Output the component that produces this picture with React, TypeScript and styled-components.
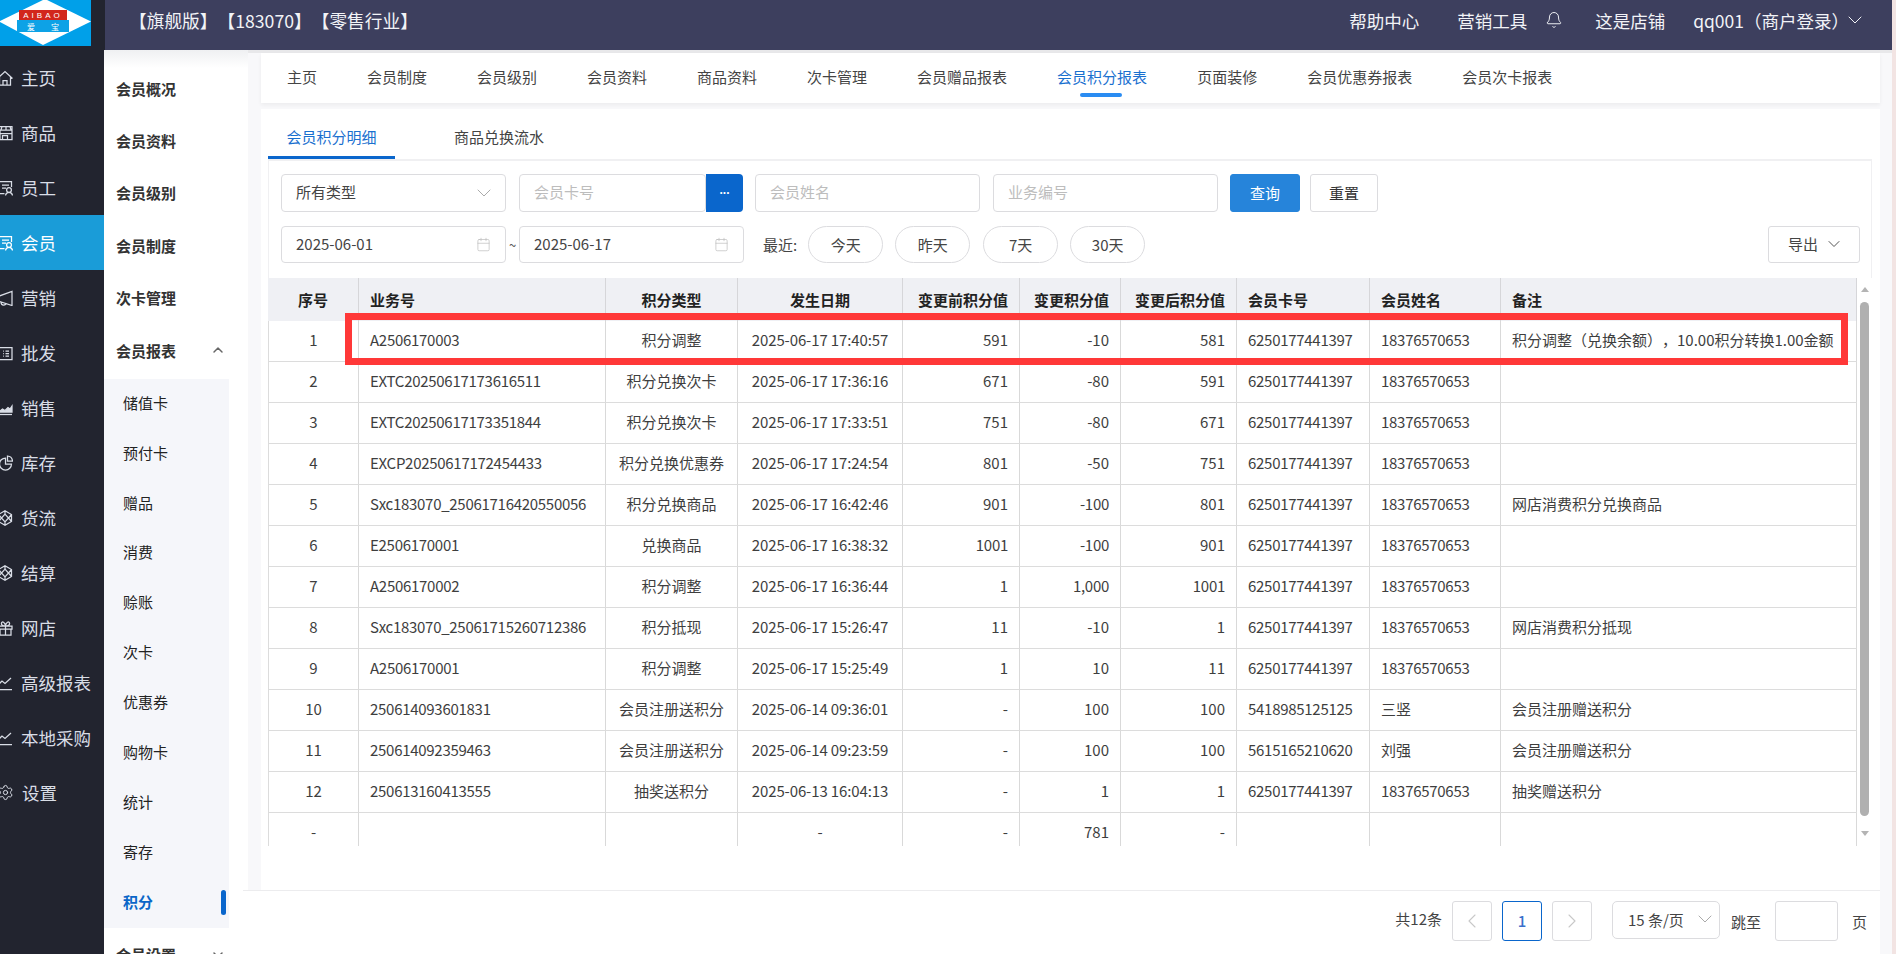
import React from "react";
import styled, { createGlobalStyle } from "styled-components";
import { Bell, Calendar, ChevronDown, ChevronLeft, ChevronRight, ChevronUp, Settings } from "lucide-react";

const Global = createGlobalStyle`
  html, body { margin: 0; padding: 0; width: 100%; height: 100%; overflow: hidden; background: #fff; }
  * { box-sizing: border-box; }
  body, input, button {
    font-family: "Noto Sans CJK SC", "Liberation Sans", sans-serif;
    text-spacing-trim: space-all;
  }
`;

const Shell = styled.div`
  position: relative;
  display: flex;
  width: 1896px;
  height: 954px;
  overflow: hidden;
  background: #f2e4e3;
  color: #333;
`;

const Rail = styled.aside`
  flex: 0 0 104px;
  background: #22242f;
  display: flex;
  flex-direction: column;
`;

const LogoSlot = styled.div`
  height: 50px;
  display: flex;
  align-items: flex-start;
`;

const RailItem = styled.div<{ $active?: boolean }>`
  height: 55px;
  flex: 0 0 55px;
  display: flex;
  align-items: center;
  gap: 8px;
  background: ${(p) => (p.$active ? "#1a9cd8" : "transparent")};
  color: ${(p) => (p.$active ? "#fff" : "#d9dde6")};
  font-size: 17.5px;
  white-space: nowrap;
  overflow: hidden;
`;

const RailIcon = styled.svg`
  flex: 0 0 16px;
  width: 16px;
  height: 16px;
  margin-left: -3px;
  fill: none;
  stroke: currentColor;
  stroke-width: 1.25;
`;

const GearWrap = styled.span`
  flex: 0 0 16px;
  margin-left: -3px;
  display: flex;
  justify-content: center;
`;

const Main = styled.div`
  flex: 0 0 1788px;
  display: flex;
  flex-direction: column;
  min-width: 0;
`;

const Header = styled.header`
  flex: 0 0 50px;
  margin-left: 1px;
  display: flex;
  align-items: center;
  padding: 0 25px 10px 24px;
  background: #3d3f5e;
  color: #f2f3f7;
  font-size: 17.5px;
  white-space: nowrap;
  box-shadow: -1px 0 0 #22242f;
`;

const Edition = styled.div`
  font-size: 17.7px;
  flex: 1;
`;

const HeaderLink = styled.span<{ $gap?: number }>`
  margin-left: ${(p) => p.$gap ?? 0}px;
`;

const HeaderIcon = styled.span<{ $gap: number }>`
  margin-left: ${(p) => p.$gap}px;
  display: flex;
`;

const Body = styled.div`
  flex: 1;
  display: flex;
  min-height: 0;
`;

const SubNav = styled.nav`
  flex: 0 0 144px;
  background: linear-gradient(#eff0f2, #fff 18px);
  display: flex;
  flex-direction: column;
  overflow: hidden;
`;

const SubHead = styled.div`
  flex: 0 0 52.4px;
  width: 125px;
  display: flex;
  align-items: center;
  justify-content: space-between;
  padding: 0 3px 0 12px;
  font-size: 15px;
  font-weight: 700;
  color: #333;
  transform: translateY(12px);
`;

const SubGroup = styled.div`
  flex: 0 0 549px;
  width: 125px;
  margin-top: 15px;
  background: #f5f6fa;
  display: flex;
  flex-direction: column;
`;

const SubItem = styled.div<{ $active?: boolean }>`
  position: relative;
  flex: 0 0 49.9px;
  display: flex;
  align-items: center;
  padding: 0 0 4px 19px;
  font-size: 15px;
  font-weight: ${(p) => (p.$active ? 700 : 400)};
  color: ${(p) => (p.$active ? "#0a66c8" : "#222")};
`;

const ActiveBar = styled.span`
  position: absolute;
  right: 3px;
  top: 12px;
  width: 5px;
  height: 25px;
  border-radius: 3px;
  background: #0a66cc;
`;

const SubFoot = styled(SubHead)`
  transform: none;
`;

const Content = styled.div`
  flex: 1;
  min-width: 0;
  display: flex;
  flex-direction: column;
  padding: 3px 12px 0 13px;
  background: #f8f8fa;
  box-shadow: inset 0 3px 0 #e8e8ea;
`;

const TopTabs = styled.div`
  flex: 0 0 50px;
  display: flex;
  align-items: center;
  gap: 50px;
  padding: 0 26px 4px;
  background: #fff;
  box-shadow: 0 2px 4px rgba(0, 0, 0, 0.05);
  margin-bottom: 6px;
  font-size: 15px;
  color: #444;
`;

const TopTab = styled.div<{ $active?: boolean }>`
  position: relative;
  white-space: nowrap;
  color: ${(p) => (p.$active ? "#1a70cf" : "#444")};
`;

const TopTabMark = styled.span`
  position: absolute;
  left: 23px;
  right: 25px;
  bottom: -10px;
  height: 4px;
  border-radius: 2px;
  background: #2a8cf2;
`;

const Panel = styled.section`
  flex: 0 0 781px;
  display: flex;
  flex-direction: column;
  padding: 0 8px 0 7px;
  background: #fff;
`;

const InnerTabs = styled.div`
  flex: 0 0 51px;
  display: flex;
  border-bottom: 2px solid #f0f0f2;
  font-size: 15px;
`;

const InnerTab = styled.div<{ $active?: boolean }>`
  width: ${(p) => (p.$active ? 127 : 208)}px;
  height: 50px;
  display: flex;
  align-items: center;
  justify-content: center;
  padding-top: 8px;
  color: ${(p) => (p.$active ? "#1a70cf" : "#444")};
  border-bottom: 3px solid ${(p) => (p.$active ? "#0a66cc" : "transparent")};
`;

const Filters = styled.div`
  flex: 0 0 117px;
  display: flex;
  flex-direction: column;
  gap: 14px;
  padding: 13px 11px 0 12px;
  border-left: 1px solid #f0f0f2;
  border-right: 1px solid #f0f0f2;
`;

const FilterRow = styled.div`
  display: flex;
  align-items: center;
`;

const Field = styled.div<{ $w?: number; $ml?: number; $h?: number }>`
  flex: 0 0 ${(p) => p.$w ?? 225}px;
  height: ${(p) => p.$h ?? 38}px;
  margin-left: ${(p) => p.$ml ?? 0}px;
  display: flex;
  align-items: center;
  justify-content: space-between;
  padding: 0 15px 3px 14px;
  border: 1px solid #dcdcdf;
  border-radius: 4px;
  background: #fff;
  font-size: 15px;
  color: #444;
`;

const FieldIcon = styled.span<{ $mr: number }>`
  display: flex;
  margin-right: ${(p) => p.$mr}px;
  transform: translateY(1px);
`;

const Placeholder = styled.span`
  color: #bdbdbd;
`;

const DotsButton = styled.div`
  flex: 0 0 37px;
  height: 38px;
  display: flex;
  align-items: center;
  justify-content: center;
  padding-bottom: 7px;
  background: #0a66cc;
  border-radius: 0 4px 4px 0;
  color: #fff;
  font-family: "Liberation Sans", sans-serif;
  font-size: 12px;
  font-weight: 700;
`;

const Btn = styled.div<{ $primary?: boolean; $w: number; $ml: number }>`
  flex: 0 0 ${(p) => p.$w}px;
  height: 38px;
  margin-left: ${(p) => p.$ml}px;
  padding-bottom: 2px;
  display: flex;
  align-items: center;
  justify-content: center;
  border-radius: 3px;
  font-size: 15px;
  background: ${(p) => (p.$primary ? "#2684da" : "#fff")};
  color: ${(p) => (p.$primary ? "#fff" : "#333")};
  border: 1px solid ${(p) => (p.$primary ? "#2684da" : "#dcdcdf")};
`;

const Tilde = styled.span`
  flex: 0 0 13px;
  text-align: center;
  font-size: 13px;
  color: #555;
`;

const RecentLabel = styled.span`
  margin-left: 19px;
  font-size: 15px;
  color: #444;
  white-space: nowrap;
`;

const Pill = styled.div<{ $ml: number }>`
  flex: 0 0 75px;
  height: 37px;
  margin-left: ${(p) => p.$ml}px;
  padding-bottom: 1px;
  display: flex;
  align-items: center;
  justify-content: center;
  border: 1px solid #dcdcdf;
  border-radius: 19px;
  font-size: 15px;
  color: #444;
`;

const ExportBtn = styled.div`
  margin-left: auto;
  flex: 0 0 92px;
  height: 37px;
  display: flex;
  align-items: center;
  gap: 6px;
  padding: 0 0 2px 19px;
  border: 1px solid #dcdcdf;
  border-radius: 3px;
  font-size: 15px;
  color: #444;
`;

const TableArea = styled.div`
  flex: 0 0 568px;
  display: flex;
  overflow: hidden;
`;

const TableClip = styled.div`
  flex: 0 0 1589px;
  height: 568px;
  overflow: hidden;
`;

const Table = styled.table`
  width: 1589px;
  table-layout: fixed;
  border-collapse: separate;
  border-spacing: 0;
  font-size: 15px;
  color: #3e3e3e;
`;

const Th = styled.th<{ $align?: string }>`
  height: 43px;
  padding: 0 11px;
  background: #eff0f4;
  font-weight: 700;
  color: #222;
  text-align: ${(p) => p.$align ?? "left"};
  border-right: 1px solid #d6d6d9;
  white-space: nowrap;
`;

const Td = styled.td<{ $align?: string; $track?: number }>`
  height: 41px;
  padding: 0 11px 4px;
  text-align: ${(p) => p.$align ?? "left"};
  letter-spacing: ${(p) => p.$track ?? 0}px;
  border-right: 1px solid #d9d9d9;
  border-bottom: 1px solid #dcdcdc;
  white-space: nowrap;
  overflow: hidden;
  &:first-child { border-left: 1px solid #dcdcdc; }
`;

const ScrollTrack = styled.div`
  flex: 0 0 15px;
  display: flex;
  flex-direction: column;
  align-items: center;
  padding: 9px 0 10px;
`;

const ArrowUp = styled.span`
  width: 0;
  height: 0;
  border-left: 4.5px solid transparent;
  border-right: 4.5px solid transparent;
  border-bottom: 5px solid #b4b4b4;
  margin-bottom: 10px;
`;

const ArrowDown = styled.span`
  width: 0;
  height: 0;
  border-left: 4.5px solid transparent;
  border-right: 4.5px solid transparent;
  border-top: 5px solid #b4b4b4;
  margin-top: 15px;
`;

const Thumb = styled.span`
  flex: 0 0 514px;
  width: 9px;
  border-radius: 5px;
  background: #b0b0b0;
`;

const Footer = styled.footer`
  flex: 1;
  margin-left: -18px;
  padding: 10px 13px 0 0;
  display: flex;
  justify-content: flex-end;
  align-items: flex-start;
  background: #fff;
  border-top: 1px solid #ececee;
  font-size: 15px;
  color: #444;
`;

const Total = styled.span`
  line-height: 36px;
  margin-right: 10px;
  white-space: nowrap;
`;

const PageBox = styled.div<{ $active?: boolean; $ml?: number }>`
  flex: 0 0 40px;
  height: 40px;
  margin-left: ${(p) => p.$ml ?? 0}px;
  padding-bottom: ${(p) => (p.$active ? 2 : 0)}px;
  display: flex;
  align-items: center;
  justify-content: center;
  border: 1px solid ${(p) => (p.$active ? "#0a66cc" : "#dcdcdf")};
  border-radius: 3px;
  color: ${(p) => (p.$active ? "#3a6fcb" : "#c8c8c8")};
  font-weight: ${(p) => (p.$active ? 500 : 400)};
`;

const SizeSelect = styled.div`
  flex: 0 0 108px;
  height: 38px;
  margin-left: 20px;
  display: flex;
  align-items: center;
  justify-content: space-between;
  padding: 0 2px 2px 15px;
  border: 1px solid #dcdcdf;
  border-radius: 5px;
  white-space: nowrap;
`;

const JumpLabel = styled.span<{ $ml: number }>`
  margin-left: ${(p) => p.$ml}px;
  line-height: 42px;
  white-space: nowrap;
`;

const JumpInput = styled.div`
  flex: 0 0 63px;
  height: 40px;
  margin-left: 14px;
  border: 1px solid #dcdcdf;
  border-radius: 3px;
`;

const RedBox = styled.div`
  position: absolute;
  left: 345px;
  top: 313px;
  width: 1503px;
  height: 52px;
  border: 7px solid #ff3838;
  pointer-events: none;
`;

const paths: Record<string, React.ReactNode> = {
  home: <path d="M0.5 8.5 8 1.5l7.5 7M2.5 7v8h11V7M6 15v-4.5h4V15" />,
  store: <path d="M2 1.5h13v3.5H2zM3 5v9.5h12V5M2 8.5h13M5.5 14.5v-4h5v4M5 1.5 4 5M9 1.5V5M13 1.5 14 5" />,
  card: <path d="M14.5 7V1.5H2v12h5.500M5 5h7M5 8h4M12 7.500a2.400 2.400 0 1 1 0 4.800 2.400 2.400 0 0 1 0-4.800zM8.500 15.500c.3-2 1.800-3.200 3.500-3.200s3.200 1.200 3.500 3.200" />,
  horn: <path d="M15 1.500v14L1 11V6.500zM4 12c0 1.800 1 3 2.500 3S9 14 9 13" />,
  list: <path d="M2 2.500h13v12H2zM6 6h.8M6 8.500h.8M6 11h.8M8.500 6H12M8.500 8.500H12M8.500 11H12" />,
  area: (
    <>
      <path d="M2 12l3.500-3 2.500 1.500 3-3 2 1.500 2-3V12z" fill="currentColor" />
      <path d="M0 14.500h15" />
    </>
  ),
  pie: <path d="M8.500 3a6 6 0 1 0 6 6h-6zM10.500 1a5.500 5.500 0 0 1 5 5h-5z" />,
  cube: <path d="M8 .8l6.500 3.700v7L8 15.200l-6.500-3.700v-7zM8 4.200l3.500 3.800L8 11.800 4.500 8zM8 .8v3.400M8 15.200v-3.400M1.500 4.500 4.500 8l-3 3.500M14.500 4.500 11.500 8l3 3.500" />,
  gift: <path d="M2 6h13v3H2zM3 9v6h11V9M8.500 6v9M8.500 6C6 6 4 5 4.500 3s3.500-1 4 3c.500-4 3.500-5 4-3s-1.500 3-4 3" />,
  line: <path d="M1 10l4-4 3 2.500L14 3M0 14.500h15" />,
};

function NavIcon({ name }: { name: string }) {
  if (name === "gear") {
    return (
      <GearWrap>
        <Settings size={17} strokeWidth={1.4} />
      </GearWrap>
    );
  }
  return <RailIcon viewBox="0 0 16 16">{paths[name]}</RailIcon>;
}

const railItems: [string, string][] = [
  ["主页", "home"],
  ["商品", "store"],
  ["员工", "card"],
  ["会员", "card"],
  ["营销", "horn"],
  ["批发", "list"],
  ["销售", "area"],
  ["库存", "pie"],
  ["货流", "cube"],
  ["结算", "cube"],
  ["网店", "gift"],
  ["高级报表", "line"],
  ["本地采购", "line"],
  ["设置", "gear"],
];

const subHeads = ["会员概况", "会员资料", "会员级别", "会员制度", "次卡管理"];
const subItems = ["储值卡", "预付卡", "赠品", "消费", "赊账", "次卡", "优惠券", "购物卡", "统计", "寄存", "积分"];
const topTabs = ["主页", "会员制度", "会员级别", "会员资料", "商品资料", "次卡管理", "会员赠品报表", "会员积分报表", "页面装修", "会员优惠券报表", "会员次卡报表"];

const columns: { title: string; width: number; head?: string; body?: string }[] = [
  { title: "序号", width: 91, head: "center", body: "center" },
  { title: "业务号", width: 247 },
  { title: "积分类型", width: 132, head: "center", body: "center" },
  { title: "发生日期", width: 165, head: "center", body: "center" },
  { title: "变更前积分值", width: 117, head: "right", body: "right" },
  { title: "变更积分值", width: 101, head: "right", body: "right" },
  { title: "变更后积分值", width: 116, head: "right", body: "right" },
  { title: "会员卡号", width: 133 },
  { title: "会员姓名", width: 131 },
  { title: "备注", width: 356 },
];

const C1 = "6250177441397";
const P1 = "18376570653";
const rows: string[][] = [
  ["1", "A2506170003", "积分调整", "2025-06-17 17:40:57", "591", "-10", "581", C1, P1, "积分调整（兑换余额），10.00积分转换1.00金额"],
  ["2", "EXTC20250617173616511", "积分兑换次卡", "2025-06-17 17:36:16", "671", "-80", "591", C1, P1, ""],
  ["3", "EXTC20250617173351844", "积分兑换次卡", "2025-06-17 17:33:51", "751", "-80", "671", C1, P1, ""],
  ["4", "EXCP20250617172454433", "积分兑换优惠券", "2025-06-17 17:24:54", "801", "-50", "751", C1, P1, ""],
  ["5", "Sxc183070_25061716420550056", "积分兑换商品", "2025-06-17 16:42:46", "901", "-100", "801", C1, P1, "网店消费积分兑换商品"],
  ["6", "E2506170001", "兑换商品", "2025-06-17 16:38:32", "1001", "-100", "901", C1, P1, ""],
  ["7", "A2506170002", "积分调整", "2025-06-17 16:36:44", "1", "1,000", "1001", C1, P1, ""],
  ["8", "Sxc183070_25061715260712386", "积分抵现", "2025-06-17 15:26:47", "11", "-10", "1", C1, P1, "网店消费积分抵现"],
  ["9", "A2506170001", "积分调整", "2025-06-17 15:25:49", "1", "10", "11", C1, P1, ""],
  ["10", "250614093601831", "会员注册送积分", "2025-06-14 09:36:01", "-", "100", "100", "5418985125125", "三竖", "会员注册赠送积分"],
  ["11", "250614092359463", "会员注册送积分", "2025-06-14 09:23:59", "-", "100", "100", "5615165210620", "刘强", "会员注册赠送积分"],
  ["12", "250613160413555", "抽奖送积分", "2025-06-13 16:04:13", "-", "1", "1", C1, P1, "抽奖赠送积分"],
  ["-", "", "", "-", "-", "781", "-", "", "", ""],
];

const trackFor = (value: string, col: number) => {
  if (col === 3) return -0.12;
  return /^[\x00-\x7f]+$/.test(value) && value.length > 3 ? -0.28 : 0;
};

function Logo() {
  return (
    <svg width="91" height="46" viewBox="0 0 91 46">
      <rect width="91" height="46" fill="#00a0e9" />
      <polygon points="-1,21.500 45,-1 91,21.500 43,45" fill="#fff" />
      <rect x="19" y="10" width="48" height="10" fill="#d2261c" />
      <rect x="17" y="20" width="52" height="12" fill="#0da2e6" />
      <text x="43" y="18" textAnchor="middle" fontSize="8" letterSpacing="3" fill="#fff" fontFamily="Liberation Sans">AIBAO</text>
      <text x="27" y="30" fontSize="8" fill="#fff" fontFamily="Noto Sans CJK SC">爱</text>
      <text x="51" y="30" fontSize="8" fill="#fff" fontFamily="Noto Sans CJK SC">宝</text>
    </svg>
  );
}

export default function App() {
  return (
    <Shell>
      <Global />
      <Rail>
        <LogoSlot>
          <Logo />
        </LogoSlot>
        {railItems.map(([label, icon]) => (
          <RailItem key={label} $active={label === "会员"}>
            <NavIcon name={icon} />
            {label}
          </RailItem>
        ))}
      </Rail>
      <Main>
        <Header>
          <Edition>【旗舰版】【183070】【零售行业】</Edition>
          <HeaderLink>帮助中心</HeaderLink>
          <HeaderLink $gap={38}>营销工具</HeaderLink>
          <HeaderIcon $gap={18}>
            <Bell size={18} strokeWidth={1.3} />
          </HeaderIcon>
          <HeaderLink $gap={32}>这是店铺</HeaderLink>
          <HeaderLink $gap={28}>qq001（商户登录）</HeaderLink>
          <HeaderIcon $gap={-6}>
            <ChevronDown size={24} strokeWidth={1} />
          </HeaderIcon>
        </Header>
        <Body>
          <SubNav>
            {subHeads.map((s) => (
              <SubHead key={s}>{s}</SubHead>
            ))}
            <SubHead>
              会员报表
              <ChevronUp size={16} strokeWidth={2.2} color="#666" />
            </SubHead>
            <SubGroup>
              {subItems.map((s) => (
                <SubItem key={s} $active={s === "积分"}>
                  {s}
                  {s === "积分" && <ActiveBar />}
                </SubItem>
              ))}
            </SubGroup>
            <SubFoot>
              会员设置
              <ChevronDown size={16} strokeWidth={2.2} color="#666" />
            </SubFoot>
          </SubNav>
          <Content>
            <TopTabs>
              {topTabs.map((t) => (
                <TopTab key={t} $active={t === "会员积分报表"}>
                  {t}
                  {t === "会员积分报表" && <TopTabMark />}
                </TopTab>
              ))}
            </TopTabs>
            <Panel>
              <InnerTabs>
                <InnerTab $active>会员积分明细</InnerTab>
                <InnerTab>商品兑换流水</InnerTab>
              </InnerTabs>
              <Filters>
                <FilterRow>
                  <Field>
                    所有类型
                    <FieldIcon $mr={-6}>
                      <ChevronDown size={24} strokeWidth={1} color="#aaa" />
                    </FieldIcon>
                  </Field>
                  <Field $w={187} $ml={13}>
                    <Placeholder>会员卡号</Placeholder>
                  </Field>
                  <DotsButton>...</DotsButton>
                  <Field $ml={12}>
                    <Placeholder>会员姓名</Placeholder>
                  </Field>
                  <Field $ml={13}>
                    <Placeholder>业务编号</Placeholder>
                  </Field>
                  <Btn $primary $w={70} $ml={12}>查询</Btn>
                  <Btn $w={68} $ml={10}>重置</Btn>
                </FilterRow>
                <FilterRow>
                  <Field $h={37}>
                    2025-06-01
                    <FieldIcon $mr={-1}>
                      <Calendar size={15} strokeWidth={1.1} color="#bbb" />
                    </FieldIcon>
                  </Field>
                  <Tilde>~</Tilde>
                  <Field $h={37}>
                    2025-06-17
                    <FieldIcon $mr={-1}>
                      <Calendar size={15} strokeWidth={1.1} color="#bbb" />
                    </FieldIcon>
                  </Field>
                  <RecentLabel>最近:</RecentLabel>
                  <Pill $ml={11}>今天</Pill>
                  <Pill $ml={12}>昨天</Pill>
                  <Pill $ml={13}>7天</Pill>
                  <Pill $ml={12}>30天</Pill>
                  <ExportBtn>
                    导出
                    <ChevronDown size={20} strokeWidth={1.2} color="#555" />
                  </ExportBtn>
                </FilterRow>
              </Filters>
              <TableArea>
                <TableClip>
                  <Table>
                    <colgroup>
                      {columns.map((c) => (
                        <col key={c.title} style={{ width: c.width }} />
                      ))}
                    </colgroup>
                    <thead>
                      <tr>
                        {columns.map((c) => (
                          <Th key={c.title} $align={c.head}>{c.title}</Th>
                        ))}
                      </tr>
                    </thead>
                    <tbody>
                      {rows.map((r, i) => (
                        <tr key={i}>
                          {r.map((v, j) => (
                            <Td key={j} $align={columns[j].body} $track={trackFor(v, j)}>{v}</Td>
                          ))}
                        </tr>
                      ))}
                    </tbody>
                  </Table>
                </TableClip>
                <ScrollTrack>
                  <ArrowUp />
                  <Thumb />
                  <ArrowDown />
                </ScrollTrack>
              </TableArea>
            </Panel>
            <Footer>
              <Total>共12条</Total>
              <PageBox>
                <ChevronLeft size={24} strokeWidth={1.1} />
              </PageBox>
              <PageBox $active $ml={10}>1</PageBox>
              <PageBox $ml={10}>
                <ChevronRight size={24} strokeWidth={1.1} />
              </PageBox>
              <SizeSelect>
                15 条/页
                <ChevronDown size={24} strokeWidth={1} color="#aaa" />
              </SizeSelect>
              <JumpLabel $ml={11}>跳至</JumpLabel>
              <JumpInput />
              <JumpLabel $ml={14}>页</JumpLabel>
            </Footer>
          </Content>
        </Body>
      </Main>
      <RedBox />
    </Shell>
  );
}
